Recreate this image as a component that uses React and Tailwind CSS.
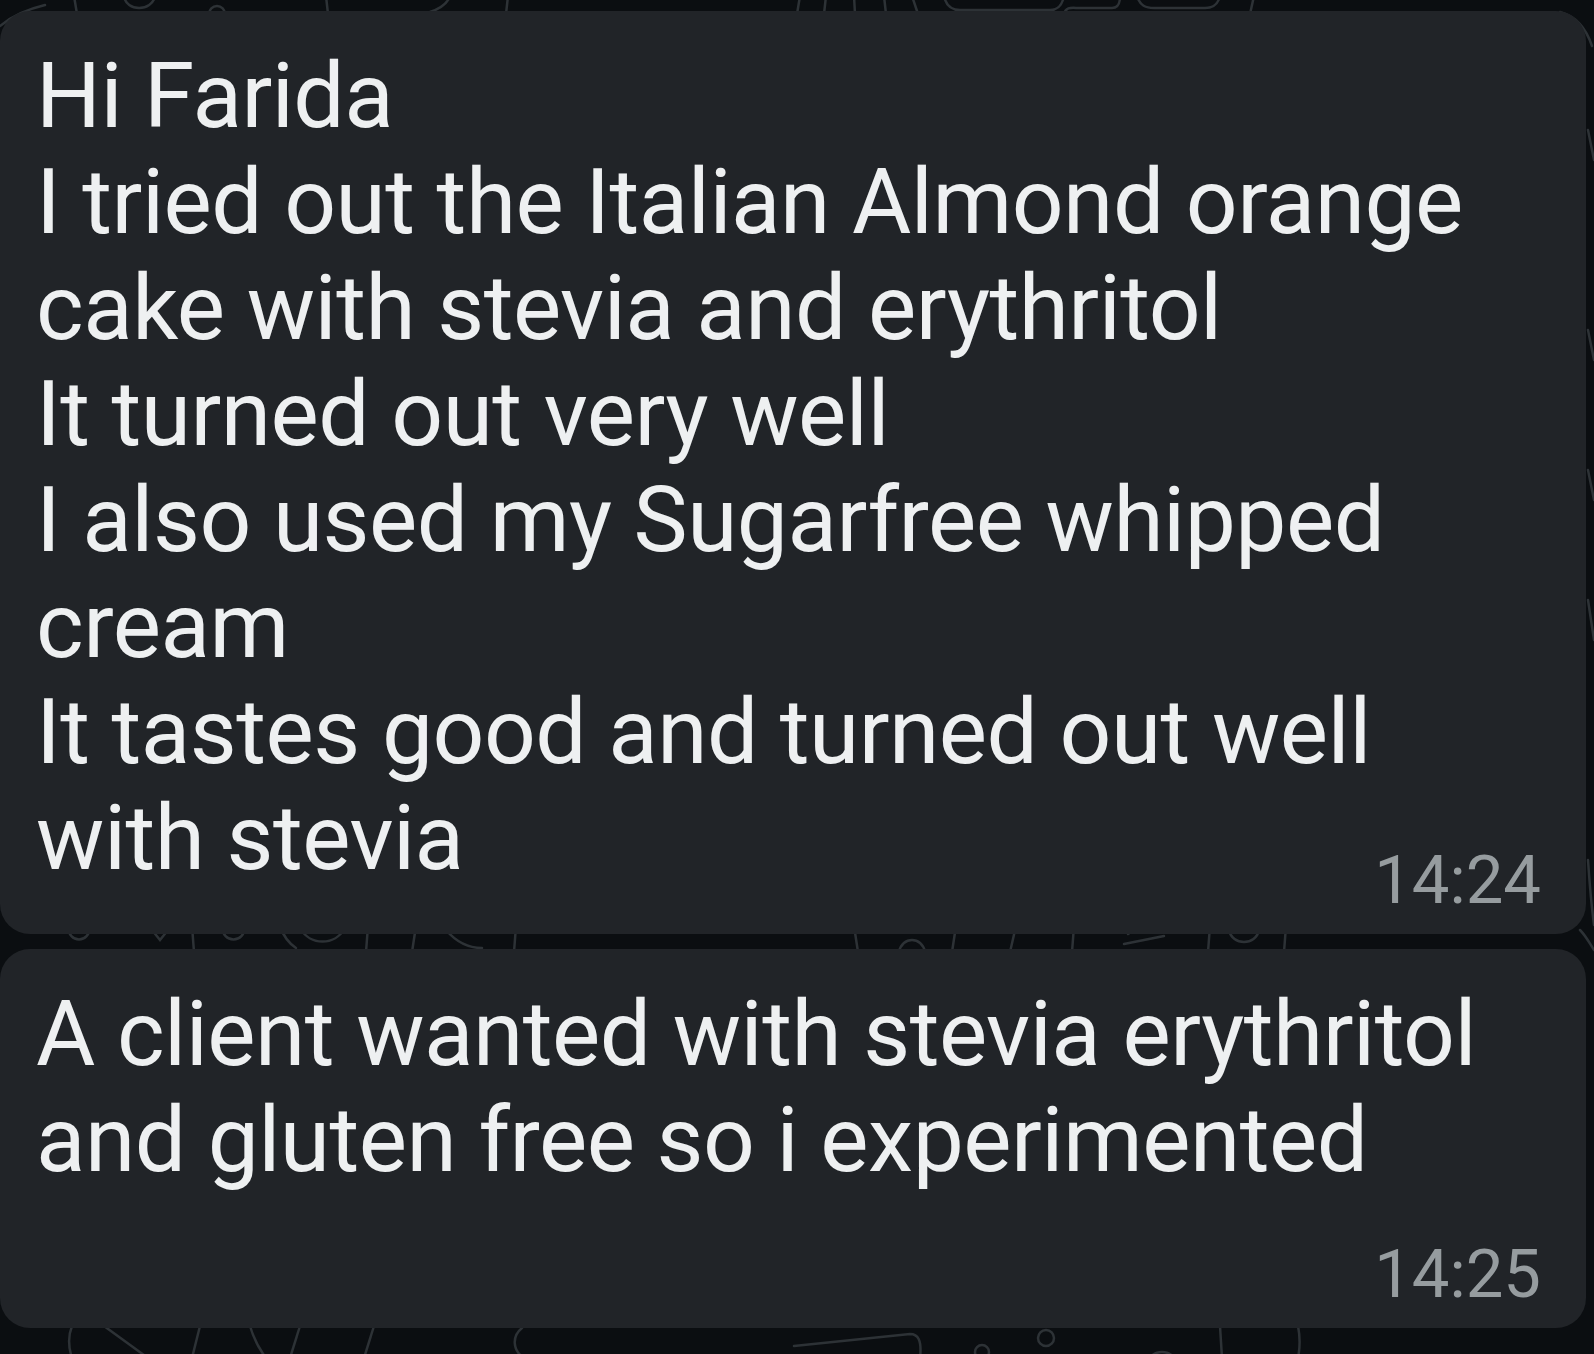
import React from "react";

const firstMessage = [
  "Hi Farida",
  "I tried out the Italian Almond orange",
  "cake with stevia and erythritol",
  "It turned out very well",
  "I also used my Sugarfree whipped",
  "cream",
  "It tastes good and turned out well",
  "with stevia",
];

const secondMessage = [
  "A client wanted with stevia erythritol",
  "and gluten free so i experimented",
];

// faint chat wallpaper doodles, only the bits peeking between bubbles
function Wallpaper() {
  return (
    <svg
      className="absolute inset-0"
      width="1594"
      height="1354"
      viewBox="0 0 1594 1354"
      fill="none"
      stroke="#2d3236"
      strokeWidth="2.5"
      strokeLinecap="round"
    >
      {/* top strip */}
      <path d="M0 26 C12 16 28 9 45 5" />
      <path d="M74 -4 L77 14" />
      <path d="M124 -4 C126 12 152 12 155 -4" />
      <circle cx="217" cy="14" r="8" />
      <path d="M326 -4 L328 14" />
      <path d="M430 12 C442 8 448 2 450 -4" />
      <path d="M508 -4 L506 14" />
      <path d="M800 -4 L797 14" />
      <path d="M826 -4 L824 14" />
      <path d="M854 -4 L855 14" />
      <path d="M884 -4 L886 14" />
      <path d="M912 -4 L918 14" />
      <path d="M944 -4 C946 6 952 10 960 10 L1050 10 C1058 10 1062 6 1064 -4" />
      <path d="M1064 14 C1066 6 1072 8 1080 8 L1112 8 C1118 8 1120 4 1120 -4" />
      <path d="M1137 -4 C1140 6 1146 8 1154 8 L1205 8 C1214 8 1218 4 1220 -4" />
      <path d="M1254 -4 L1250 14" />
      <path d="M1560 12 C1575 16 1586 28 1592 46" />
      <path d="M1588 130 L1594 160" />
      <path d="M1588 330 L1594 360" />
      <path d="M1588 470 L1594 500" />
      <path d="M1588 600 L1594 640" />
      <path d="M1588 860 C1590 890 1592 910 1594 925" />

      {/* gap between bubbles */}
      <path d="M68 926 C68 944 90 944 90 926" />
      <path d="M152 930 L160 940 L168 930" />
      <path d="M192 926 L194 952" />
      <path d="M222 926 C222 944 245 944 245 926" />
      <path d="M300 928 C310 946 335 946 345 928" />
      <path d="M280 926 C284 938 290 944 296 948" />
      <path d="M368 926 L366 952" />
      <path d="M416 926 L412 952" />
      <path d="M446 930 C458 944 470 948 482 948" />
      <path d="M516 926 L514 952" />
      <path d="M854 926 L858 952" />
      <path d="M899 952 C902 936 922 936 925 952" />
      <path d="M956 926 L952 952" />
      <path d="M1016 926 L1010 952" />
      <path d="M1074 926 L1072 952" />
      <path d="M1124 944 L1164 936" />
      <path d="M1128 934 L1140 926" />
      <path d="M1210 926 L1208 952" />
      <path d="M1229 930 C1232 946 1256 946 1259 930" />
      <path d="M1286 926 L1284 952" />
      <path d="M1580 930 C1586 936 1590 944 1594 950" />

      {/* bottom strip */}
      <path d="M72 1326 C68 1336 68 1346 72 1358" />
      <path d="M104 1326 L148 1358" />
      <path d="M200 1326 L192 1358" />
      <path d="M250 1326 C254 1340 260 1350 266 1358" />
      <path d="M300 1326 L290 1358" />
      <path d="M374 1326 L364 1358" />
      <path d="M524 1358 C512 1350 512 1336 522 1328" />
      <path d="M794 1346 L910 1334 C918 1334 922 1340 920 1358" />
      <circle cx="982" cy="1352" r="7" />
      <circle cx="1046" cy="1338" r="8" />
      <circle cx="1162" cy="1368" r="16" />
      <path d="M1220 1326 L1222 1358" />
      <path d="M1298 1326 C1300 1336 1300 1348 1298 1358" />
    </svg>
  );
}

function Bubble({ lines, time, timeGap }) {
  return (
    <div className="relative mr-[8px] rounded-[30px] bg-[#212428] pl-[36px] pr-[45px] pt-[32px] pb-[20px]">
      <div className="text-[91px] leading-[106px] text-[#eef0f1] tracking-[-0.5px]">
        {lines.map((line, i) => (
          <div key={i} className="whitespace-nowrap">
            {line}
          </div>
        ))}
      </div>
      <div className={`flex justify-end ${timeGap}`}>
        <span className="text-[67px] leading-[67px] text-[#969c9f]">{time}</span>
      </div>
    </div>
  );
}

export default function App() {
  return (
    <div
      className="relative w-[1594px] h-[1354px] overflow-hidden bg-[#0b0e11]"
      style={{ fontFamily: "Roboto, 'Noto Sans', sans-serif" }}
    >
      <Wallpaper />
      <div className="relative flex flex-col gap-[15px] pt-[11px]">
        <Bubble lines={firstMessage} time="14:24" timeGap="-mt-[44px]" />
        <Bubble lines={secondMessage} time="14:25" timeGap="mt-[48px]" />
      </div>
    </div>
  );
}
